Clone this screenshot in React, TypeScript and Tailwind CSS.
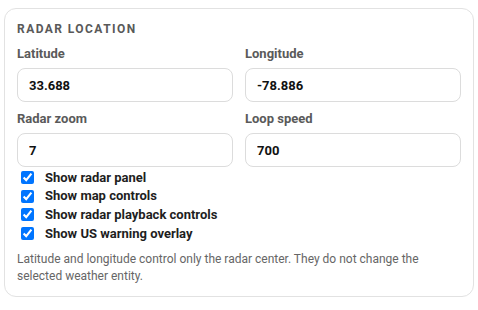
import React, { useState } from 'react';

const fields = [
  { id: 'lat', label: 'Latitude', value: '33.688' },
  { id: 'lon', label: 'Longitude', value: '-78.886' },
  { id: 'zoom', label: 'Radar zoom', value: '7' },
  { id: 'speed', label: 'Loop speed', value: '700' },
];

const toggles = [
  'Show radar panel',
  'Show map controls',
  'Show radar playback controls',
  'Show US warning overlay',
];

export default function App() {
  const [values, setValues] = useState<Record<string, string>>(
    Object.fromEntries(fields.map((f) => [f.id, f.value]))
  );
  const [checked, setChecked] = useState<boolean[]>(toggles.map(() => true));

  return (
    <div className="w-[478px] h-[310px] bg-white pt-[8px] pl-[4px] font-['Roboto',sans-serif]">
      <div className="w-[470px] rounded-[12px] border border-[#e2e2e2] px-[12px] pt-[12px] pb-[11px]">
        <h2 className="text-[12px] leading-[16px] font-bold uppercase tracking-[0.12em] text-[#595959]">
          Radar Location
        </h2>

        {/* Inputs */}
        <div className="grid grid-cols-2 gap-x-[12px] gap-y-[8px] mt-[8px]">
          {fields.map((f) => (
            <label key={f.id} className="flex flex-col">
              <span className="text-[13px] leading-[18px] font-bold text-[#5a5a5a]">{f.label}</span>
              <input
                type="text"
                value={values[f.id]}
                onChange={(e) => setValues((prev) => ({ ...prev, [f.id]: e.target.value }))}
                className="mt-[5px] h-[34px] rounded-[8px] border border-[#dcdcdc] px-[11px] text-[13px] font-bold text-[#111] outline-none"
              />
            </label>
          ))}
        </div>

        {/* Toggles */}
        <div className="mt-[1px] flex flex-col">
          {toggles.map((t, i) => (
            <label key={t} className="flex items-center h-[18.7px] text-[13px] font-bold text-[#1e1e1e]">
              <input
                type="checkbox"
                checked={checked[i]}
                onChange={() => setChecked((prev) => prev.map((c, j) => (j === i ? !c : c)))}
                className="ml-[4px] mr-[11px] w-[13px] h-[13px]"
              />
              {t}
            </label>
          ))}
        </div>

        <p className="mt-[8px] text-[12px] leading-[17px] text-[#666]">
          Latitude and longitude control only the radar center. They do not change the selected weather entity.
        </p>
      </div>
    </div>
  );
}
